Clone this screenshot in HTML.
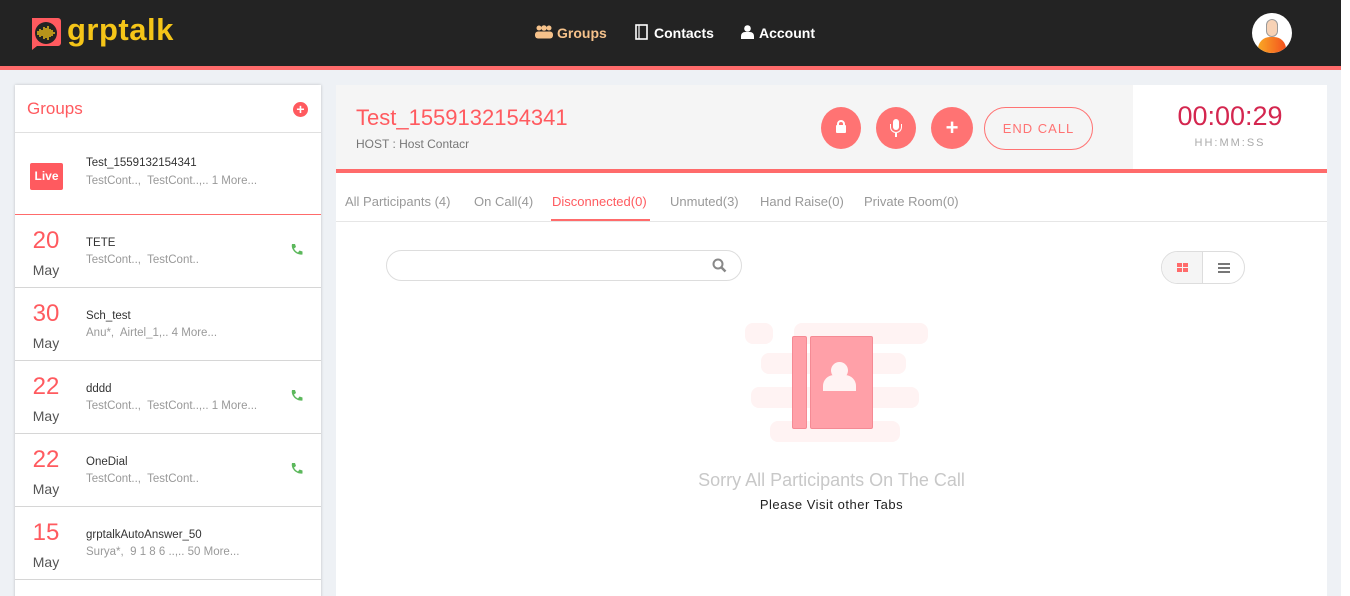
<!DOCTYPE html>
<html><head><meta charset="utf-8"><style>
*{box-sizing:border-box;margin:0;padding:0}
html,body{width:1350px;height:596px;overflow:hidden}
body{background:#eef1f5;font-family:"Liberation Sans",sans-serif;position:relative}
.abs{position:absolute}
#hdr{left:0;top:0;width:1341px;height:66px;background:#232323}
#bar{left:0;top:66px;width:1341px;height:4px;background:#ff6b6b}
#sb{left:1341px;top:0;width:9px;height:596px;background:#fff}
.nav{color:#fff;font-size:14px;font-weight:bold;top:25px}
#side{left:15px;top:85px;width:306px;height:520px;background:#fff;box-shadow:0 0 3px rgba(0,0,0,.2)}
.row{position:absolute;left:0;width:306px;border-bottom:1px solid #d6d6d6}
.d{position:absolute;left:15px;width:32px;text-align:center;color:#ff5a5f;font-size:24px}
.m{position:absolute;left:15px;width:32px;text-align:center;color:#555;font-size:14px}
.t{position:absolute;left:71px;font-size:11.5px;color:#333}
.s{position:absolute;left:71px;font-size:11.5px;color:#999}
.ph{position:absolute;left:275px}
#main{left:336px;top:85px;width:991px;height:520px;background:#fff}
.tab{position:absolute;top:109px;font-size:13px;color:#999}
.cb{position:absolute;top:22px;width:40px;height:42px;border-radius:50%;background:#ff7373}
</style></head><body>
<div id="hdr" class="abs"></div><div id="bar" class="abs"></div><div id="sb" class="abs"></div>
<svg class="abs" style="left:29px;top:17px" width="34" height="33" viewBox="0 0 34 33"><path d="M3 1h26a3 3 0 0 1 3 3v22a3 3 0 0 1-3 3H8l-5 4z" fill="#ff5a5f"/><circle cx="17" cy="16" r="11" fill="#232323"/><g stroke="#f5c518" stroke-width="1.4"><path d="M9 14v4M11 12v8M13 13v6M15 10v12M17 11v10M19 9v14M21 12v8M23 13v6M25 15v2"/></g></svg>
<div class="abs" style="left:67px;top:12px;color:#f5c518;font-size:31px;font-weight:bold;letter-spacing:0.5px">grptalk</div>
<svg class="abs" style="left:535px;top:25px" width="18" height="14" viewBox="0 0 18 14" fill="#f6c28b"><circle cx="4" cy="3" r="2.5"/><circle cx="9" cy="3" r="2.8"/><circle cx="14" cy="3" r="2.5"/><rect x="0" y="6.5" width="18" height="7" rx="3"/></svg>
<div class="abs nav" style="left:557px;color:#f6c28b">Groups</div>
<svg class="abs" style="left:635px;top:24px" width="13" height="16" viewBox="0 0 13 16"><rect x="1" y="1" width="11" height="14" fill="none" stroke="#fff" stroke-width="1.6"/><path d="M4 1v14" stroke="#fff" stroke-width="1.2"/></svg>
<div class="abs nav" style="left:654px">Contacts</div>
<svg class="abs" style="left:741px;top:25px" width="13" height="14" viewBox="0 0 13 14" fill="#fff"><circle cx="6.5" cy="3.5" r="3.3"/><path d="M0 14v-3a4 4 0 0 1 4-4h5a4 4 0 0 1 4 4v3z"/></svg>
<div class="abs nav" style="left:759px">Account</div>
<div class="abs" style="left:1252px;top:13px;width:40px;height:40px;border-radius:50%;background:#fff;overflow:hidden"><div class="abs" style="left:14px;top:6px;width:12px;height:18px;border-radius:6px;background:#f7d2b5;border:1px solid #999"></div><div class="abs" style="left:6px;top:24px;width:28px;height:16px;border-radius:12px 12px 0 0;background:linear-gradient(90deg,#f9a825,#f4511e)"></div></div>

<div id="side" class="abs">
<div class="abs" style="left:12px;top:14px;color:#ff5a5f;font-size:17px">Groups</div>
<div class="abs" style="left:278px;top:17px;width:15px;height:15px;border-radius:50%;background:#ff5a5f;color:#fff;font-size:14px;line-height:15px;text-align:center;font-weight:bold">+</div>
<div class="abs" style="left:0;top:47px;width:306px;height:1px;background:#e0e0e0"></div>
<div class="row" style="top:48px;height:82px;border-bottom:1px solid #ff6b6b">
<div class="abs" style="left:15px;top:30px;width:33px;height:27px;background:#ff5a5f;border-radius:2px;color:#fff;font-size:12px;font-weight:bold;text-align:center;line-height:27px">Live</div>
<div class="t" style="top:24px">Test_1559132154341</div><div class="s" style="top:42px">TestCont..,&nbsp; TestCont..,.. 1 More...</div></div>
<div class="row" style="top:130px;height:73px"><div class="d" style="top:12px">20</div><div class="m" style="top:47px">May</div><div class="t" style="top:22px">TETE</div><div class="s" style="top:39px">TestCont..,&nbsp; TestCont..</div><svg class="ph" style="top:28px" width="13" height="13" viewBox="0 0 13 13"><path d="M2 1l3 0 1 3-2 1.5c1 2 2 3 4 4L9.5 7.5l3 1v3c-6 1-12-5-10.5-10.5z" fill="#5cb85c"/></svg></div>
<div class="row" style="top:203px;height:73px"><div class="d" style="top:12px">30</div><div class="m" style="top:47px">May</div><div class="t" style="top:22px">Sch_test</div><div class="s" style="top:39px">Anu*,&nbsp; Airtel_1,.. 4 More...</div></div>
<div class="row" style="top:276px;height:73px"><div class="d" style="top:12px">22</div><div class="m" style="top:47px">May</div><div class="t" style="top:22px">dddd</div><div class="s" style="top:39px">TestCont..,&nbsp; TestCont..,.. 1 More...</div><svg class="ph" style="top:28px" width="13" height="13" viewBox="0 0 13 13"><path d="M2 1l3 0 1 3-2 1.5c1 2 2 3 4 4L9.5 7.5l3 1v3c-6 1-12-5-10.5-10.5z" fill="#5cb85c"/></svg></div>
<div class="row" style="top:349px;height:73px"><div class="d" style="top:12px">22</div><div class="m" style="top:47px">May</div><div class="t" style="top:22px">OneDial</div><div class="s" style="top:39px">TestCont..,&nbsp; TestCont..</div><svg class="ph" style="top:28px" width="13" height="13" viewBox="0 0 13 13"><path d="M2 1l3 0 1 3-2 1.5c1 2 2 3 4 4L9.5 7.5l3 1v3c-6 1-12-5-10.5-10.5z" fill="#5cb85c"/></svg></div>
<div class="row" style="top:422px;height:73px"><div class="d" style="top:12px">15</div><div class="m" style="top:47px">May</div><div class="t" style="top:22px">grptalkAutoAnswer_50</div><div class="s" style="top:39px">Surya*,&nbsp; 9 1 8 6 ..,.. 50 More...</div></div>
</div>

<div id="main" class="abs">
<div class="abs" style="left:0;top:0;width:797px;height:84px;background:#f5f5f5"></div>
<div class="abs" style="left:0;top:84px;width:991px;height:4px;background:#ff6b6b"></div>
<div class="abs" style="left:20px;top:20px;color:#ff5a5f;font-size:22px">Test_1559132154341</div>
<div class="abs" style="left:20px;top:52px;color:#777;font-size:12px">HOST : Host Contacr</div>
<div class="cb" style="left:485px"><div class="abs" style="left:15px;top:18px;width:10px;height:8px;background:#fff;border-radius:1px"></div><div class="abs" style="left:16px;top:13px;width:8px;height:8px;border:2px solid #fff;border-radius:4px 4px 0 0"></div></div>
<div class="cb" style="left:540px"><div class="abs" style="left:17px;top:12px;width:6px;height:11px;background:#fff;border-radius:3px"></div><div class="abs" style="left:14px;top:17px;width:12px;height:9px;border:1.5px solid #fff;border-top:none;border-radius:0 0 6px 6px"></div><div class="abs" style="left:19px;top:26px;width:2px;height:4px;background:#fff"></div></div>
<div class="cb" style="left:595px;width:42px;color:#fff;font-size:22px;font-weight:bold;text-align:center;line-height:42px">+</div>
<div class="abs" style="left:648px;top:22px;width:109px;height:43px;border:1px solid #ff7373;border-radius:22px;color:#ff7373;font-size:13px;text-align:center;line-height:41px;letter-spacing:1px">END CALL</div>
<div class="abs" style="left:797px;top:16px;width:194px;text-align:center;color:#d4264f;font-size:27px">00:00:29</div>
<div class="abs" style="left:797px;top:52px;width:194px;text-align:center;color:#aaa;font-size:11px;letter-spacing:2px">HH:MM:SS</div>
<div class="tab" style="left:9px">All Participants (4)</div>
<div class="tab" style="left:138px">On Call(4)</div>
<div class="tab" style="left:216px;color:#ff5a5f">Disconnected(0)</div>
<div class="abs" style="left:215px;top:134px;width:99px;height:3px;background:#ff6b6b"></div>
<div class="tab" style="left:334px">Unmuted(3)</div>
<div class="tab" style="left:424px">Hand Raise(0)</div>
<div class="tab" style="left:528px">Private Room(0)</div>
<div class="abs" style="left:0;top:136px;width:991px;height:1px;background:#e6e6e6"></div>
<div class="abs" style="left:50px;top:165px;width:356px;height:31px;border:1px solid #ddd;border-radius:16px"></div>
<svg class="abs" style="left:376px;top:173px" width="15" height="15"><circle cx="6" cy="6" r="4.5" fill="none" stroke="#888" stroke-width="2"/><path d="M9.5 9.5l4 4" stroke="#888" stroke-width="2.5"/></svg>
<div class="abs" style="left:825px;top:166px;width:84px;height:33px;border:1px solid #ddd;border-radius:17px;overflow:hidden"><div class="abs" style="left:0;top:0;width:41px;height:33px;background:#f5f5f5;border-right:1px solid #ddd"></div>
<div class="abs" style="left:15px;top:11px;width:5px;height:4px;background:#ff6b6b"></div><div class="abs" style="left:21px;top:11px;width:5px;height:4px;background:#ff6b6b"></div><div class="abs" style="left:15px;top:16px;width:5px;height:4px;background:#ff6b6b"></div><div class="abs" style="left:21px;top:16px;width:5px;height:4px;background:#ff6b6b"></div>
<div class="abs" style="left:56px;top:11px;width:12px;height:2px;background:#777;box-shadow:0 4px 0 #777,0 8px 0 #777"></div></div>
<div class="abs" style="left:409px;top:238px;width:28px;height:21px;background:#fff3f3;border-radius:8px"></div>
<div class="abs" style="left:458px;top:238px;width:134px;height:21px;background:#fff3f3;border-radius:8px"></div>
<div class="abs" style="left:425px;top:268px;width:145px;height:21px;background:#fff3f3;border-radius:8px"></div>
<div class="abs" style="left:415px;top:302px;width:168px;height:21px;background:#fff3f3;border-radius:8px"></div>
<div class="abs" style="left:434px;top:336px;width:130px;height:21px;background:#fff3f3;border-radius:8px"></div>
<div class="abs" style="left:456px;top:251px;width:15px;height:93px;background:#ffa0a8;border:1px solid #f58a94;border-radius:2px"></div>
<div class="abs" style="left:474px;top:251px;width:63px;height:93px;background:#ffa0a8;border:1px solid #f58a94;border-radius:2px"></div>
<div class="abs" style="left:495px;top:277px;width:17px;height:17px;border-radius:50%;background:#fff3f3"></div>
<div class="abs" style="left:487px;top:290px;width:33px;height:16px;border-radius:11px 11px 0 0;background:#fff3f3"></div>
<div class="abs" style="left:0;top:385px;width:991px;text-align:center;color:#c8c8c8;font-size:18px">Sorry All Participants On The Call</div>
<div class="abs" style="left:0;top:412px;width:991px;text-align:center;color:#222;font-size:13px;letter-spacing:0.5px">Please Visit other Tabs</div>
</div>
</body></html>
